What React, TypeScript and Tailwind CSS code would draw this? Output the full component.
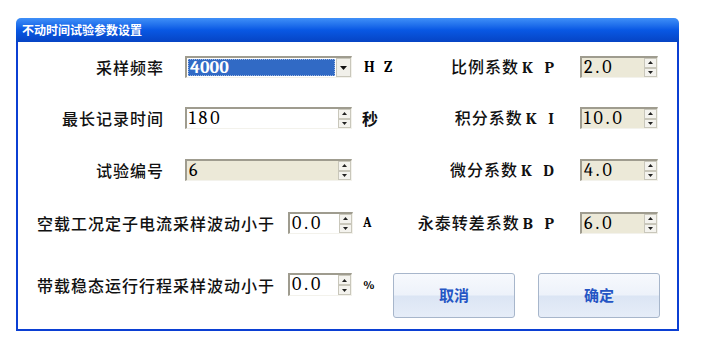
import React from "react";

const serif = "font-serif";

function Arrows() {
  return (
    <div className="flex h-full w-[13px] flex-col">
      <div className="flex flex-1 items-center justify-center border border-[#c9c7bb] bg-[#f4f3ee]">
        <svg width="5" height="3" viewBox="0 0 5 3"><path d="M2.5 0 L5 3 L0 3 Z" fill="#222" /></svg>
      </div>
      <div className="flex flex-1 items-center justify-center border border-[#c9c7bb] bg-[#f4f3ee]">
        <svg width="5" height="3" viewBox="0 0 5 3"><path d="M0 0 L5 0 L2.5 3 Z" fill="#222" /></svg>
      </div>
    </div>
  );
}

function Spin({ value, className }: { value: string; className: string }) {
  return (
    <div className={`flex items-stretch border-t-2 border-l-2 border-t-[#9f9c8f] border-l-[#9f9c8f] border-b border-r border-b-[#f3f2ec] border-r-[#f3f2ec] ${className}`}>
      <div className="flex flex-1 items-center pl-[2px] font-serif text-[18px] leading-none tracking-[3px] text-black">{value}</div>
      <Arrows />
    </div>
  );
}

function Combo({ value }: { value: string }) {
  return (
    <div className="flex h-[22px] w-[167px] items-stretch border-t-2 border-l-2 border-t-[#9f9c8f] border-l-[#9f9c8f] border-b border-r border-b-[#f3f2ec] border-r-[#f3f2ec] bg-white">
      <div className="m-px flex flex-1 items-center border border-dotted border-[#9fb6e0] bg-[#316ac5] pl-[1px]">
        <span className="font-serif text-[18px] font-bold leading-none text-white">{value}</span>
      </div>
      <div className="flex w-[15px] items-center justify-center border border-[#c9c7bb] bg-[#f1f0ea]">
        <svg width="7" height="4" viewBox="0 0 7 4"><path d="M0 0 L7 0 L3.5 4 Z" fill="#111" /></svg>
      </div>
    </div>
  );
}

function Btn({ text }: { text: string }) {
  return (
    <button className="flex h-[45px] w-[122px] items-center justify-center rounded-[3px] border border-[#a7b6cb] bg-[linear-gradient(to_bottom,#f7f9fd_0%,#edf2fa_48%,#dbe5f4_52%,#e6edf8_100%)] text-[15px] font-bold text-[#2555c4]">
      {text}
    </button>
  );
}

const label = "text-[16px] font-medium tracking-[1px] text-[#111] leading-none";

export default function App() {
  return (
    <div className="min-h-[347px] bg-white pl-[16px] pt-[18px] font-[family-name:'Noto_Sans_CJK_SC',sans-serif]">
      <div className="w-[663px]">
        <div className="flex h-[24px] items-center rounded-t-[5px] bg-gradient-to-b from-[#3f8ff7] via-[#0958e4] to-[#0644c4] pl-[6px]">
          <span className="text-[12px] font-bold text-white">不动时间试验参数设置</span>
        </div>
        <div className="border-x-2 border-b-2 border-[#0b3fd3] bg-white pt-[14px] pb-[11px]">
          {/* row 1 */}
          <div className="flex h-[22px] items-center">
            <div className={`w-[146px] text-right ${label}`}>采样频率</div>
            <div className="ml-[21px]"><Combo value="4000" /></div>
            <div className={`w-[48px] pl-[12px] text-[15px] font-bold tracking-[3px] ${serif}`}>H Z</div>
            <div className={`w-[158px] text-right ${label}`}>比例系数<span className={`${serif} pl-[3px] font-semibold tracking-[4px]`}>K P</span></div>
            <Spin value="2.0" className="ml-[22px] h-[22px] w-[78px] bg-[#ece9d8]" />
          </div>
          {/* row 2 */}
          <div className="mt-[29px] flex h-[22px] items-center">
            <div className={`w-[146px] text-right ${label}`}>最长记录时间</div>
            <Spin value="180" className="ml-[21px] h-[22px] w-[167px] bg-white" />
            <div className="w-[48px] pl-[10px] text-[16px] font-bold leading-none text-[#111]">秒</div>
            <div className={`w-[158px] text-right ${label}`}>积分系数<span className={`${serif} pl-[3px] font-semibold tracking-[4px]`}>K I</span></div>
            <Spin value="10.0" className="ml-[22px] h-[22px] w-[78px] bg-[#ece9d8]" />
          </div>
          {/* row 3 */}
          <div className="mt-[30px] flex h-[22px] items-center">
            <div className={`w-[146px] text-right ${label}`}>试验编号</div>
            <Spin value="6" className="ml-[21px] h-[22px] w-[167px] bg-[#ece9d8]" />
            <div className="w-[48px]" />
            <div className={`w-[158px] text-right ${label}`}>微分系数<span className={`${serif} pl-[3px] font-semibold tracking-[4px]`}>K D</span></div>
            <Spin value="4.0" className="ml-[22px] h-[22px] w-[78px] bg-[#ece9d8]" />
          </div>
          {/* row 4 */}
          <div className="mt-[31px] flex h-[22px] items-center">
            <div className={`w-[270px] pl-[19px] ${label}`}>空载工况定子电流采样波动小于</div>
            <Spin value="0.0" className="h-[22px] w-[65px] bg-white" />
            <div className={`w-[47px] pl-[10px] text-[13px] font-bold ${serif}`}>A</div>
            <div className={`w-[158px] text-right ${label}`}>永泰转差系数<span className={`${serif} pl-[3px] font-semibold tracking-[4px]`}>B P</span></div>
            <Spin value="6.0" className="ml-[22px] h-[22px] w-[78px] bg-[#ece9d8]" />
          </div>
          {/* row 5 */}
          <div className="mt-[39px] flex items-start">
            <div className="flex h-[23px] items-center">
              <div className={`w-[270px] pl-[19px] ${label}`}>带载稳态运行行程采样波动小于</div>
              <Spin value="0.0" className="h-[23px] w-[64px] bg-white" />
              <div className={`w-[41px] pl-[11px] text-[12px] font-bold ${serif}`}>%</div>
            </div>
            <Btn text="取消" />
            <div className="ml-[23px]"><Btn text="确定" /></div>
          </div>
        </div>
      </div>
    </div>
  );
}
